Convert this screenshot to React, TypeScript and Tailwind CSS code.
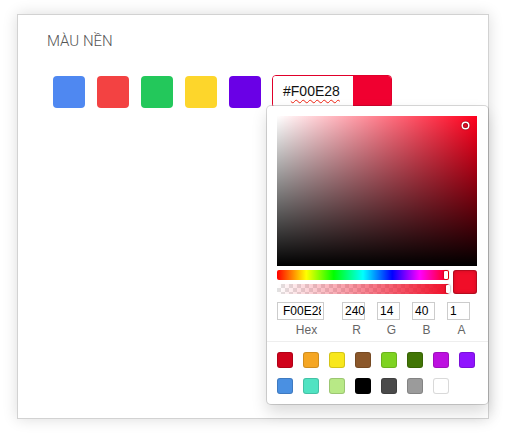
import React from "react";

const mainSwatches = ["#4F88F1", "#F34242", "#23C85B", "#FDD62B", "#6A00E6"];

const presetColors = [
  "#D0021B",
  "#F5A623",
  "#F8E71C",
  "#8B572A",
  "#7ED321",
  "#417505",
  "#BD10E0",
  "#9013FE",
  "#4A90E2",
  "#50E3C2",
  "#B8E986",
  "#000000",
  "#4A4A4A",
  "#9B9B9B",
  "#FFFFFF",
];

// Sketch-style picker popover
function SketchPicker() {
  const fields = [
    { label: "R", value: "240" },
    { label: "G", value: "14" },
    { label: "B", value: "40" },
    { label: "A", value: "1" },
  ];

  return (
    <div className="absolute left-[-5px] top-[31px] z-10 w-[221px] rounded-[4px] bg-white pt-[10px] shadow-[0_0_0_1px_rgba(0,0,0,0.15),0_8px_16px_rgba(0,0,0,0.15)]">
      <div className="px-[10px]">
        {/* Saturation */}
        <div className="relative h-[150px] w-[200px] bg-[#FF001D]">
          <div className="absolute inset-0 bg-gradient-to-r from-white to-transparent" />
          <div className="absolute inset-0 bg-gradient-to-t from-black to-transparent" />
          <div className="absolute left-[186px] top-[7px] h-[5px] w-[5px] rounded-full shadow-[0_0_0_1.5px_#fff,inset_0_0_1px_1px_rgba(0,0,0,0.3),0_0_1px_2px_rgba(0,0,0,0.4)]" />
        </div>

        {/* Hue / alpha / preview */}
        <div className="mt-[4px] flex">
          <div className="flex w-[172px] flex-col gap-[4px]">
            <div className="relative h-[10px] rounded-[2px] bg-[linear-gradient(to_right,#f00_0%,#ff0_17%,#0f0_33%,#0ff_50%,#00f_67%,#f0f_83%,#f00_100%)]">
              <div className="absolute left-[167px] top-[1px] h-[8px] w-[4px] rounded-[1px] bg-white shadow-[0_0_2px_rgba(0,0,0,0.6)]" />
            </div>
            <div className="relative h-[10px] rounded-[2px] bg-[repeating-conic-gradient(#e2e2e2_0_25%,#fff_0_50%)] bg-[length:8px_8px]">
              <div className="absolute inset-0 rounded-[2px] bg-gradient-to-r from-[rgba(240,14,40,0)] to-[rgb(240,14,40)]" />
              <div className="absolute left-[169px] top-[1px] h-[8px] w-[4px] rounded-[1px] bg-white shadow-[0_0_2px_rgba(0,0,0,0.6)]" />
            </div>
          </div>
          <div className="ml-[4px] h-[24px] w-[24px] rounded-[3px] bg-[rgb(240,14,40)] shadow-[inset_0_0_0_1px_rgba(0,0,0,0.15),inset_0_0_4px_rgba(0,0,0,0.25)]" />
        </div>

        {/* Fields */}
        <div className="mt-[8px] flex font-['Liberation_Sans',Arial,sans-serif] text-[12px]">
          <div className="w-[59px]">
            <div className="h-[18px] w-[47px] pl-[6px] shadow-[inset_0_0_0_1px_#ccc]">
              <div className="w-[38px] overflow-hidden whitespace-nowrap leading-[18px] text-[#000]">
                F00E28
              </div>
            </div>
            <div className="pt-[3px] text-center leading-[14px] text-[#666]">Hex</div>
          </div>
          {fields.map((f) => (
            <div key={f.label} className="w-[35px] pl-[6px]">
              <div className="h-[18px] w-[23px] overflow-hidden pl-[3px] leading-[18px] text-[#000] shadow-[inset_0_0_0_1px_#ccc]">
                {f.value}
              </div>
              <div className="pt-[3px] text-center leading-[14px] text-[#666]">{f.label}</div>
            </div>
          ))}
        </div>
      </div>

      {/* Presets */}
      <div className="mt-[4px] flex flex-wrap border-t border-[#eee] pl-[10px] pt-[10px]">
        {presetColors.map((c) => (
          <div
            key={c}
            className="mb-[10px] mr-[10px] h-[16px] w-[16px] rounded-[3px] shadow-[inset_0_0_0_1px_rgba(0,0,0,0.15)]"
            style={{ background: c }}
          />
        ))}
      </div>
    </div>
  );
}

export default function App() {
  return (
    <div className="h-[434px] w-[506px] bg-white pl-[17px] pt-[14px]">
      <div className="h-[405px] w-[472px] border border-[#d2d2d2] bg-white pl-[29px] pt-[14px] shadow-[0_0_14px_rgba(0,0,0,0.14)]">
        <div className="font-['Roboto',sans-serif] text-[15px] font-light leading-[24px] text-[#555]">
          MÀU NỀN
        </div>

        <div className="ml-[6px] mt-[22px] flex items-center gap-[12px]">
          {mainSwatches.map((c) => (
            <div key={c} className="h-[32px] w-[32px] rounded-[4px]" style={{ background: c }} />
          ))}
          <div className="relative ml-[-1px]">
            <div className="flex h-[33px] w-[120px] overflow-hidden rounded-[4px] border border-[#e0002a]">
              <div className="flex flex-1 items-center bg-white pl-[10px] font-['Liberation_Sans',Arial,sans-serif] text-[14px] text-[#111]">
                #
                <span className="underline decoration-[#e21] decoration-wavy decoration-1 underline-offset-[3px]">
                  F00E28
                </span>
              </div>
              <div className="w-[38px] bg-[#F00030]" />
            </div>
            <SketchPicker />
          </div>
        </div>
      </div>
    </div>
  );
}
